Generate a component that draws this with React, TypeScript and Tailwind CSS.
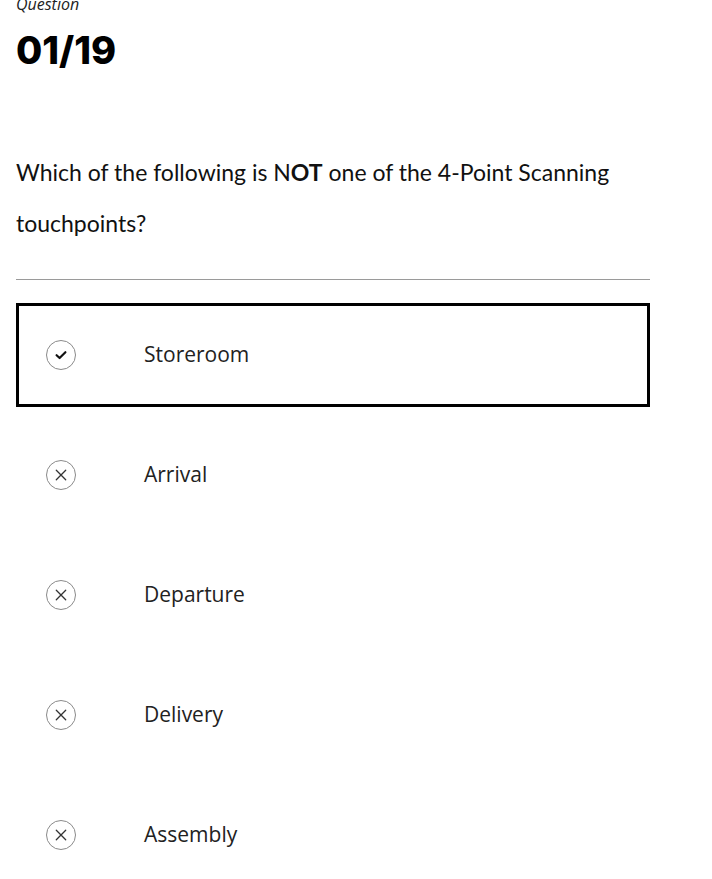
import React from 'react';

interface Option {
  label: string;
  selected?: boolean;
}

const options: Option[] = [
  { label: 'Storeroom', selected: true },
  { label: 'Arrival' },
  { label: 'Departure' },
  { label: 'Delivery' },
  { label: 'Assembly' },
];

const CheckIcon: React.FC = () => (
  <svg width="14" height="14" viewBox="0 0 14 14" fill="none">
    <path d="M2.6 7.2l3 2.8L11.4 4.2" stroke="#111" strokeWidth="2.2" strokeLinecap="round" strokeLinejoin="round" />
  </svg>
);

const CrossIcon: React.FC = () => (
  <svg width="14" height="14" viewBox="0 0 14 14" fill="none">
    <path d="M2.3 2.3l9.4 9.4M11.7 2.3l-9.4 9.4" stroke="#333" strokeWidth="1.3" strokeLinecap="round" />
  </svg>
);

// Single answer row
const OptionRow: React.FC<{ option: Option }> = ({ option }) => (
  <div
    className={`flex h-[104px] items-center border-[3px] pl-[27px] ${
      option.selected ? 'border-black' : 'border-transparent'
    }`}
  >
    <div className="flex h-[30px] w-[30px] items-center justify-center rounded-full border border-[#8a8a8a]">
      {option.selected ? <CheckIcon /> : <CrossIcon />}
    </div>
    <span className="ml-[68px] text-[21px] text-[#222] font-['Open_Sans',sans-serif]">{option.label}</span>
  </div>
);

export default function App() {
  return (
    <div className="min-h-screen overflow-hidden bg-white">
      <div className="ml-4 w-[634px]">
        {/* Header */}
        <div className="-mt-2 text-base leading-6 italic text-[#222] font-['Open_Sans',sans-serif]">Question</div>
        <div className="mt-[15px] text-[38px] leading-none font-extrabold text-black font-['Inter',sans-serif]">
          01/19
        </div>

        {/* Question text */}
        <p className="mt-[78px] text-[23px] leading-[51px] text-[#111] font-['Lato',sans-serif]">
          Which of the following is N<b className="font-bold">OT</b> one of the 4-Point Scanning touchpoints?
        </p>

        <div className="mt-[30px] h-px bg-[#9a9a9a]" />

        {/* Options */}
        <div className="mt-[23px] flex flex-col gap-4">
          {options.map((o) => (
            <OptionRow key={o.label} option={o} />
          ))}
        </div>
      </div>
    </div>
  );
}
